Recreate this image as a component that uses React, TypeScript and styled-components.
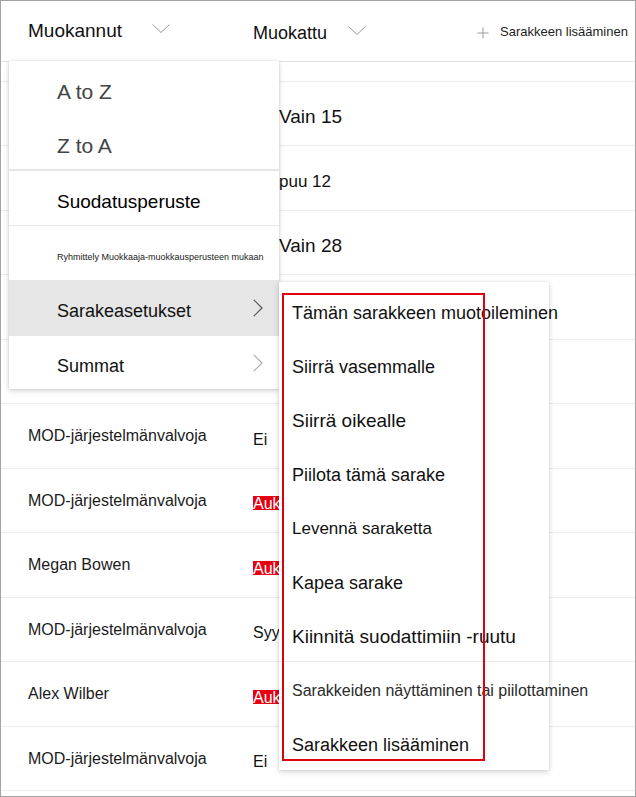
import React from "react";
import styled, { createGlobalStyle } from "styled-components";

const GlobalStyle = createGlobalStyle`
  html, body { margin: 0; padding: 0; background: #fff; }
  body { font-family: "Liberation Sans", Arial, sans-serif; color: #1b1b1b; }
  * { box-sizing: border-box; }
`;

const Frame = styled.div`
  position: relative;
  width: 636px;
  height: 797px;
  border: 1px solid #a3a3a3;
  background: #fff;
  overflow: hidden;
`;

const Header = styled.div`
  display: grid;
  grid-template-columns: 225px 224px 1fr;
  align-items: center;
  height: 61px;
  padding-left: 27px;
  border-bottom: 1px solid #e1e1e1;
`;

const HeaderCell = styled.div<{ $size: number; $shift?: number }>`
  display: flex;
  align-items: center;
  font-size: ${(p) => p.$size}px;
  color: #111;
  padding-top: ${(p) => p.$shift ?? 0}px;
  white-space: nowrap;
`;

const DownChevron = styled.svg<{ $gap: number }>`
  width: 18px;
  height: 9px;
  margin-left: ${(p) => p.$gap}px;
  margin-bottom: 5px;
  flex: none;
`;

const AddColumn = styled.div`
  display: flex;
  align-items: center;
  gap: 11px;
  font-size: 13px;
  color: #1e1e1e;
  white-space: nowrap;
`;

const PlusIcon = styled.svg`
  width: 12px;
  height: 12px;
  margin-top: 3px;
  flex: none;
`;

const Spacer = styled.div`
  height: 20px;
  border-bottom: 1px solid #ececec;
`;

const Row = styled.div`
  display: grid;
  grid-template-columns: 225px 224px 1fr;
  align-items: center;
  height: 64px;
  padding-left: 27px;
  border-bottom: 1px solid #ececec;
  &:nth-child(even) { height: 65px; }
`;

const NameCell = styled.div`
  font-size: 16px;
  color: #1b1b1b;
  white-space: nowrap;
`;

const ValueCell = styled.div<{ $size: number; $inset: number }>`
  font-size: ${(p) => p.$size}px;
  color: #111;
  padding-top: 7px;
  padding-left: ${(p) => p.$inset}px;
  white-space: nowrap;
`;

const Flag = styled.span`
  display: inline-block;
  height: 14px;
  line-height: 15px;
  background: #e60012;
  color: #fff;
  font-size: 16px;
`;

const MainMenu = styled.div`
  position: absolute;
  left: 8px;
  top: 60px;
  width: 270px;
  background: #fff;
  box-shadow: 0 0 2px rgba(0, 0, 0, 0.12), 0 2px 6px rgba(0, 0, 0, 0.16);
  z-index: 2;
`;

const MenuItem = styled.div<{
  $size: number;
  $h: number;
  $color?: string;
  $active?: boolean;
  $divider?: boolean;
}>`
  display: flex;
  align-items: center;
  height: ${(p) => p.$h}px;
  padding: 7px 16px 0 48px;
  font-size: ${(p) => p.$size}px;
  color: ${(p) => p.$color ?? "#111"};
  background: ${(p) => (p.$active ? "#e6e6e6" : "#fff")};
  border-bottom: ${(p) => (p.$divider ? "1px solid #e8e8e8" : "none")};
  white-space: nowrap;
`;

const GroupSeparator = styled.div`
  height: 2px;
  background: #e6e6e6;
`;

const RightChevron = styled.svg`
  width: 10px;
  height: 18px;
  margin-left: auto;
  margin-top: -7px;
  flex: none;
`;

const SubMenu = styled.div`
  position: absolute;
  left: 278px;
  top: 281px;
  width: 270px;
  padding-top: 2px;
  background: #fff;
  box-shadow: 0 0 2px rgba(0, 0, 0, 0.12), 0 2px 6px rgba(0, 0, 0, 0.16);
  z-index: 3;
`;

const SubItem = styled.div<{ $size: number; $h: number; $color?: string }>`
  display: flex;
  align-items: center;
  height: ${(p) => p.$h}px;
  padding: 4px 0 0 13px;
  font-size: ${(p) => p.$size}px;
  color: ${(p) => p.$color ?? "#111"};
  white-space: nowrap;
`;

const SubDivider = styled.div`
  height: 1px;
  background: #e8e8e8;
`;

const Highlight = styled.div`
  position: absolute;
  left: 281px;
  top: 292px;
  width: 203px;
  height: 468px;
  border: 2px solid #e00010;
  z-index: 4;
  pointer-events: none;
`;

type RowData = {
  name: string;
  value: string;
  size?: number;
  inset?: number;
  flag?: boolean;
};

const rows: RowData[] = [
  { name: "", value: "Vain 15", size: 19, inset: 26 },
  { name: "", value: "puu 12", size: 17, inset: 26 },
  { name: "", value: "Vain 28", size: 19, inset: 26 },
  { name: "", value: "" },
  { name: "", value: "" },
  { name: "MOD-järjestelmänvalvoja", value: "Ei" },
  { name: "MOD-järjestelmänvalvoja", value: "Auk", flag: true },
  { name: "Megan Bowen", value: "Auk", flag: true },
  { name: "MOD-järjestelmänvalvoja", value: "Syy" },
  { name: "Alex Wilber", value: "Auk", flag: true },
  { name: "MOD-järjestelmänvalvoja", value: "Ei" },
];

type SubData = { label: string; size: number; h: number; color?: string };

const subTop: SubData[] = [
  { label: "Tämän sarakkeen muotoileminen", size: 18, h: 54 },
  { label: "Siirrä vasemmalle", size: 18, h: 54 },
  { label: "Siirrä oikealle", size: 19, h: 54 },
  { label: "Piilota tämä sarake", size: 18, h: 54 },
  { label: "Levennä saraketta", size: 17, h: 54 },
  { label: "Kapea sarake", size: 18, h: 54 },
  { label: "Kiinnitä suodattimiin -ruutu", size: 19, h: 53 },
];

const subBottom: SubData[] = [
  { label: "Sarakkeiden näyttäminen tai piilottaminen", size: 16, h: 54, color: "#2b2b2b" },
  { label: "Sarakkeen lisääminen", size: 18, h: 54 },
];

const Down = ({ gap }: { gap: number }) => (
  <DownChevron $gap={gap} viewBox="0 0 18 9">
    <polyline points="0.5,0.5 9,8.5 17.5,0.5" fill="none" stroke="#9a9a9a" strokeWidth="1" />
  </DownChevron>
);

const Right = ({ color }: { color: string }) => (
  <RightChevron viewBox="0 0 10 18">
    <polyline points="0.8,0.8 9,9 0.8,17.2" fill="none" stroke={color} strokeWidth="1.2" />
  </RightChevron>
);

export default function App() {
  return (
    <>
      <GlobalStyle />
      <Frame>
        <Header>
          <HeaderCell $size={19}>
            Muokannut
            <Down gap={30} />
          </HeaderCell>
          <HeaderCell $size={18} $shift={4}>
            Muokattu
            <Down gap={21} />
          </HeaderCell>
          <AddColumn>
            <PlusIcon viewBox="0 0 12 12">
              <path d="M6 0.5V11.5M0.5 6H11.5" stroke="#9a9a9a" strokeWidth="1" fill="none" />
            </PlusIcon>
            Sarakkeen lisääminen
          </AddColumn>
        </Header>
        <Spacer />
        <div>
          {rows.map((r, i) => (
            <Row key={i}>
              <NameCell>{r.name}</NameCell>
              <ValueCell $size={r.size ?? 16} $inset={r.inset ?? 0}>
                {r.flag ? <Flag>{r.value}</Flag> : r.value}
              </ValueCell>
            </Row>
          ))}
        </div>

        <MainMenu>
          <MenuItem $size={21} $h={54} $color="#444">A to Z</MenuItem>
          <MenuItem $size={21} $h={54} $color="#444">Z to A</MenuItem>
          <GroupSeparator />
          <MenuItem $size={19} $h={55} $color="#000" $divider>Suodatusperuste</MenuItem>
          <MenuItem $size={9} $h={54} $color="#222">Ryhmittely Muokkaaja-muokkausperusteen mukaan</MenuItem>
          <MenuItem $size={18} $h={56} $active>
            Sarakeasetukset
            <Right color="#555" />
          </MenuItem>
          <MenuItem $size={18} $h={53}>
            Summat
            <Right color="#aaa" />
          </MenuItem>
        </MainMenu>

        <SubMenu>
          {subTop.map((s) => (
            <SubItem key={s.label} $size={s.size} $h={s.h} $color={s.color}>
              {s.label}
            </SubItem>
          ))}
          <SubDivider />
          {subBottom.map((s) => (
            <SubItem key={s.label} $size={s.size} $h={s.h} $color={s.color}>
              {s.label}
            </SubItem>
          ))}
        </SubMenu>

        <Highlight />
      </Frame>
    </>
  );
}
